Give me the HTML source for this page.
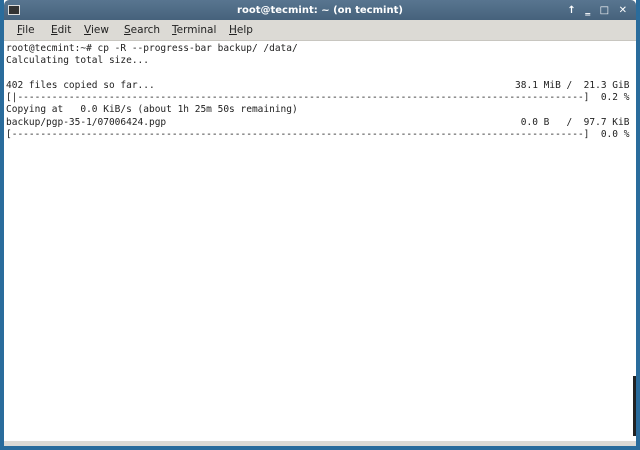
<!DOCTYPE html>
<html><head><style>
html,body{margin:0;padding:0;width:640px;height:450px;overflow:hidden;background:#2a6c9c;}
.win{position:absolute;left:4px;top:0;width:632px;height:446px;background:#fff;}
.title{position:absolute;left:0;top:0;width:632px;height:20px;background:linear-gradient(#587590,#46627c);border-radius:5px 5px 0 0;color:#fff;font:bold 10px "DejaVu Sans","Liberation Sans",sans-serif;text-align:center;line-height:22px;}
.menu{position:absolute;left:0;top:20px;width:632px;height:20px;background:#dcdad5;border-bottom:1px solid #c8c6c0;font:10.5px "DejaVu Sans","Liberation Sans",sans-serif;color:#222;}
.menu span{position:absolute;top:4px;}
pre{position:absolute;left:2px;top:43px;margin:0;font:9.5px/12.3px "DejaVu Sans Mono","Liberation Mono",monospace;color:#222;}
.bot{position:absolute;left:0;top:441px;width:632px;height:5px;background:#dcdad5;}
.thumb{position:absolute;left:629px;top:376px;width:3px;height:60px;background:#222;}
</style></head><body>
<div class="win">
<div class="title">root@tecmint: ~ (on tecmint)
<div style="position:absolute;left:4px;top:5px;width:10px;height:8px;background:#333;border:1px solid #ddd;"></div>
<div style="position:absolute;right:6px;top:0;font-size:10px;letter-spacing:3px;">↑ ‗ □ ✕</div>
</div>
<div class="menu"><span style="left:13px"><u>F</u>ile</span><span style="left:47px"><u>E</u>dit</span><span style="left:80px"><u>V</u>iew</span><span style="left:120px"><u>S</u>earch</span><span style="left:168px"><u>T</u>erminal</span><span style="left:225px"><u>H</u>elp</span></div>
<pre>root@tecmint:~# cp -R --progress-bar backup/ /data/
Calculating total size...

402 files copied so far...                                                               38.1 MiB /  21.3 GiB
[|---------------------------------------------------------------------------------------------------]  0.2 %
Copying at   0.0 KiB/s (about 1h 25m 50s remaining)
backup/pgp-35-1/07006424.pgp                                                              0.0 B   /  97.7 KiB
[----------------------------------------------------------------------------------------------------]  0.0 %</pre>
<div class="thumb"></div>
<div class="bot"></div>
</div>
</body></html>
